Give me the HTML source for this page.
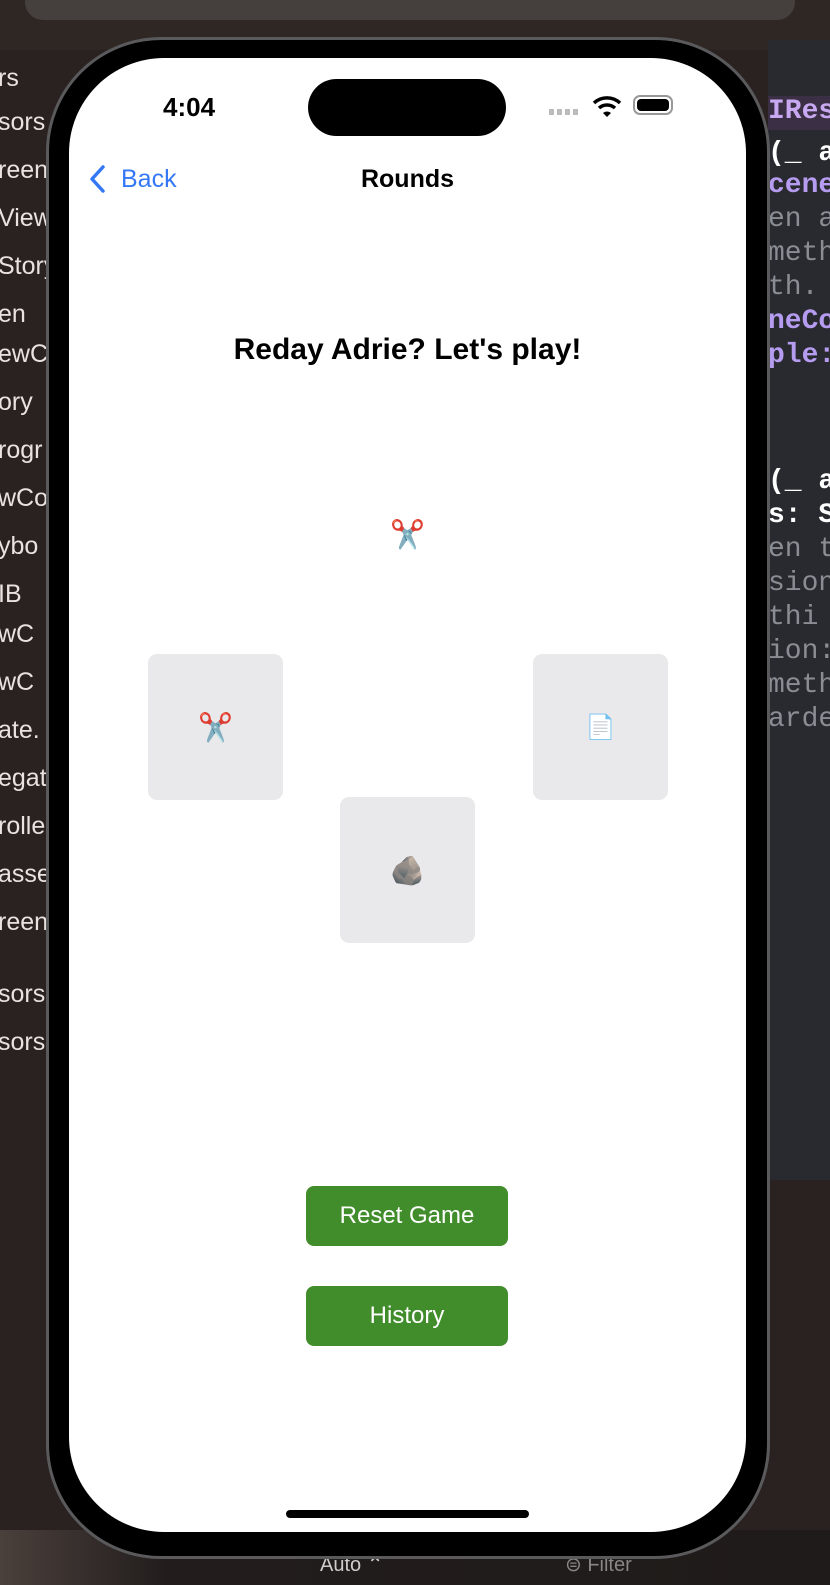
<!DOCTYPE html>
<html><head><meta charset="utf-8"><style>
*{margin:0;padding:0;box-sizing:border-box}
body{width:830px;height:1585px;overflow:hidden;background:#2a2220;font-family:"Liberation Sans","DejaVu Sans",sans-serif;position:relative}
.abs{position:absolute}
.side{color:#e8e2e0;font-size:25px;left:-2px}
.code{font-family:"Liberation Mono",monospace;font-size:28px;left:768px;white-space:pre;color:#8a8d94}
.box{position:absolute;background:#e9e9eb;border-radius:9px;width:135px;height:146px;display:flex;align-items:center;justify-content:center;font-size:28px}
.btn{position:absolute;left:306px;width:202px;height:60px;background:#418d2c;border-radius:8px;color:#fff;font-size:24px;display:flex;align-items:center;justify-content:center}
</style></head><body>
<div class="abs" style="left:0;top:0;width:830px;height:50px;background:#2e2724"></div>
<div class="abs" style="left:25px;top:-20px;width:770px;height:40px;background:#45403e;border-radius:18px"></div>
<div class="abs" style="left:768px;top:40px;width:62px;height:1140px;background:#292a30"></div>
<div class="abs" style="left:768px;top:96px;width:62px;height:34px;background:#3a2f45"></div>
<div class="abs" style="left:0;top:1530px;width:830px;height:55px;background:linear-gradient(90deg,#4a403c,#221d1c 20%,#1f1b1a)"></div>
<div class="abs side" style="top:64px">rs</div>
<div class="abs side" style="top:108px">sors</div>
<div class="abs side" style="top:156px">reen</div>
<div class="abs side" style="top:204px">View</div>
<div class="abs side" style="top:252px">Story</div>
<div class="abs side" style="top:300px">en</div>
<div class="abs side" style="top:340px">ewC</div>
<div class="abs side" style="top:388px">ory</div>
<div class="abs side" style="top:436px">rogr</div>
<div class="abs side" style="top:484px">wCo</div>
<div class="abs side" style="top:532px">ybo</div>
<div class="abs side" style="top:580px">IB</div>
<div class="abs side" style="top:620px">wC</div>
<div class="abs side" style="top:668px">wC</div>
<div class="abs side" style="top:716px">ate.</div>
<div class="abs side" style="top:764px">egat</div>
<div class="abs side" style="top:812px">rolle</div>
<div class="abs side" style="top:860px">asse</div>
<div class="abs side" style="top:908px">reen</div>
<div class="abs side" style="top:980px">sors</div>
<div class="abs side" style="top:1028px">sors</div>
<div class="abs code" style="top:96px;color:#c8a8f0;font-weight:bold">IRes</div>
<div class="abs code" style="top:138px;color:#fff;font-weight:bold">(_ a</div>
<div class="abs code" style="top:170px;color:#b69cf0;font-weight:bold">cene</div>
<div class="abs code" style="top:204px">en a</div>
<div class="abs code" style="top:238px">meth</div>
<div class="abs code" style="top:272px">th.</div>
<div class="abs code" style="top:306px;color:#b69cf0;font-weight:bold">neCo</div>
<div class="abs code" style="top:340px;color:#b69cf0;font-weight:bold">ple:</div>
<div class="abs code" style="top:466px;color:#fff;font-weight:bold">(_ a</div>
<div class="abs code" style="top:500px;color:#fff;font-weight:bold">s: S</div>
<div class="abs code" style="top:534px">en t</div>
<div class="abs code" style="top:568px">sion</div>
<div class="abs code" style="top:602px">thi</div>
<div class="abs code" style="top:636px">ion:</div>
<div class="abs code" style="top:670px">meth</div>
<div class="abs code" style="top:704px">arde</div>
<div class="abs" style="left:320px;top:1552px;color:#d0cccc;font-size:20px">Auto ⌃</div>
<div class="abs" style="left:565px;top:1552px;color:#8a8686;font-size:20px">⊜ Filter</div>
<!-- phone -->
<div class="abs" style="left:46px;top:37px;width:724px;height:1522px;border-radius:115px;background:#000;border:3px solid #5a5a5c"></div>
<div class="abs" style="left:69px;top:58px;width:677px;height:1474px;border-radius:95px;background:#fff;overflow:hidden">
  <div class="abs" style="left:239px;top:21px;width:198px;height:57px;border-radius:29px;background:#000"></div>
  <div class="abs" style="left:94px;top:34px;font-size:26px;font-weight:bold;color:#000">4:04</div>
  <div class="abs" style="left:480px;top:51px;width:30px;height:6px;background:repeating-linear-gradient(90deg,#bbb 0 5px,transparent 5px 8px)"></div>
  <svg class="abs" style="left:523px;top:36px" width="30" height="24" viewBox="0 0 30 24"><path d="M2 9 A19 19 0 0 1 28 9" stroke="#000" stroke-width="3.5" fill="none"/><path d="M7 14 A12 12 0 0 1 23 14" stroke="#000" stroke-width="3.5" fill="none"/><path d="M11 19 L15 23 L19 19 A6 6 0 0 0 11 19Z" fill="#000"/></svg>
  <div class="abs" style="left:564px;top:37px;width:40px;height:20px;border:2px solid #999;border-radius:7px;padding:2px"><div style="width:100%;height:100%;background:#000;border-radius:4px"></div></div>
  <svg class="abs" style="left:19px;top:106px" width="18" height="30" viewBox="0 0 18 30"><path d="M15 3 L4 15 L15 27" stroke="#3478f6" stroke-width="3.5" fill="none" stroke-linecap="round" stroke-linejoin="round"/></svg>
  <div class="abs" style="left:52px;top:107px;font-size:25px;color:#3478f6">Back</div>
  <div class="abs" style="left:0;width:677px;top:107px;text-align:center;font-size:25px;font-weight:bold;color:#000">Rounds</div>
  <div class="abs" style="left:0;width:677px;top:275px;text-align:center;font-size:30px;font-weight:bold;color:#000">Reday Adrie? Let's play!</div>
  <div class="abs" style="left:0;width:677px;top:460px;text-align:center;font-size:28px">✂️</div>
  <div class="box" style="left:79px;top:596px">✂️</div>
  <div class="box" style="left:464px;top:596px;font-size:24px">📄</div>
  <div class="box" style="left:271px;top:739px">🪨</div>
  <div class="btn" style="left:237px;top:1128px">Reset Game</div>
  <div class="btn" style="left:237px;top:1228px">History</div>
  <div class="abs" style="left:217px;top:1452px;width:243px;height:8px;border-radius:4px;background:#000"></div>
</div>
</body></html>
